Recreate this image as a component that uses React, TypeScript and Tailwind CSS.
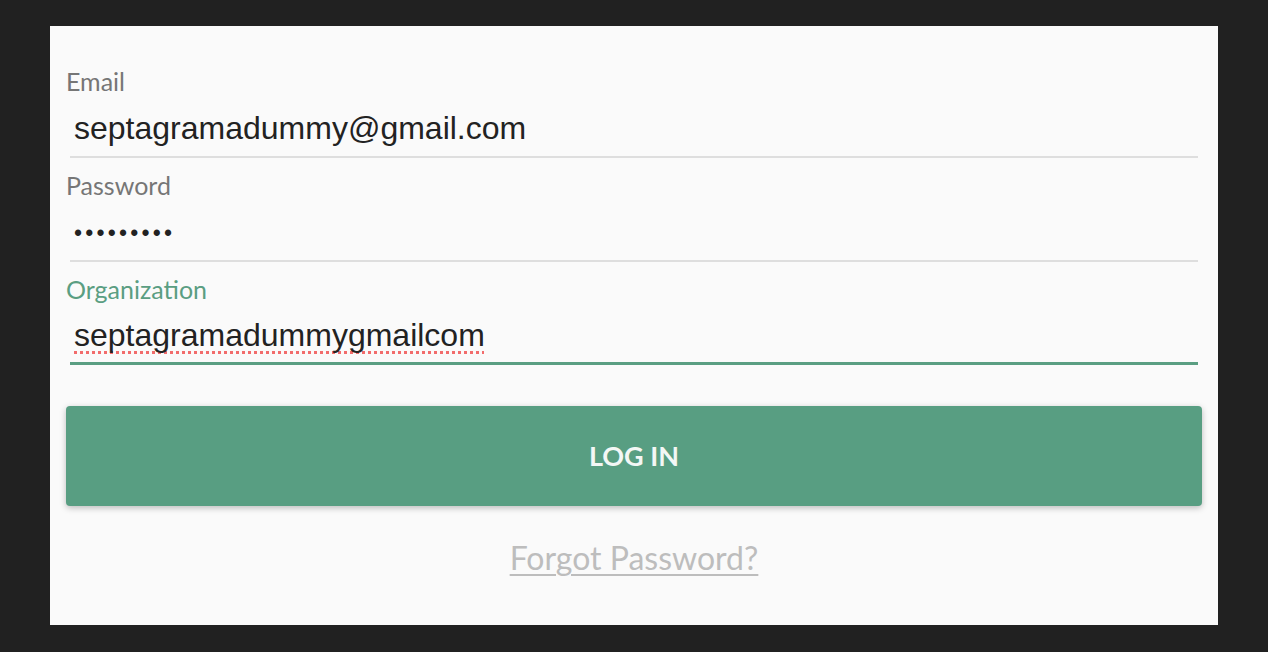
import React from 'react';

interface FieldProps {
  label: string;
  value: React.ReactNode;
  active?: boolean;
}

function Field({ label, value, active }: FieldProps) {
  return (
    <div className="flex flex-col">
      <label
        className={`font-['Lato',sans-serif] text-[25px] leading-[30px] ${
          active ? 'text-[#5a9e82]' : 'text-[#767676]'
        }`}
      >
        {label}
      </label>
      <div
        className={`mx-1 mt-1 flex items-center pl-1 font-['Liberation_Sans',Arial,sans-serif] text-[32px] text-[#222] ${
          active ? 'h-[57px] border-b-[3px] border-[#5a9e82]' : 'h-[58px] border-b-2 border-[#dedede]'
        }`}
      >
        {value}
      </div>
    </div>
  );
}

export default function App() {
  return (
    <div className="min-h-[652px] bg-[#212121] px-[50px] pt-[26px] pb-[27px]">
      <div className="flex h-[599px] flex-col bg-[#fafafa] px-4 pt-[40px]">
        <div className="flex flex-col gap-3">
          <Field label="Email" value="septagramadummy@gmail.com" />
          <Field
            label="Password"
            value={<span className="pt-[2px] text-[23px] tracking-[3.2px]">•••••••••</span>}
          />
          <Field
            label="Organization"
            active
            value={
              <span className="underline decoration-[#f26c6c] decoration-dotted decoration-[2.75px] underline-offset-[5px] [text-decoration-skip-ink:none]">
                septagramadummygmailcom
              </span>
            }
          />
        </div>

        <button
          type="button"
          className="mt-[41px] h-[100px] w-full rounded bg-[#589e82] font-['Lato',sans-serif] text-[27px] font-bold text-[#f3f7f5] shadow-[0_2px_6px_rgba(0,0,0,0.25)]"
        >
          LOG IN
        </button>

        <div className="mt-[33px] flex justify-center">
          <a
            href="#"
            className="font-['Lato',sans-serif] text-[32px] leading-[38px] text-[#bdbdbd] underline decoration-2 underline-offset-[4px]"
          >
            Forgot Password?
          </a>
        </div>
      </div>
    </div>
  );
}
